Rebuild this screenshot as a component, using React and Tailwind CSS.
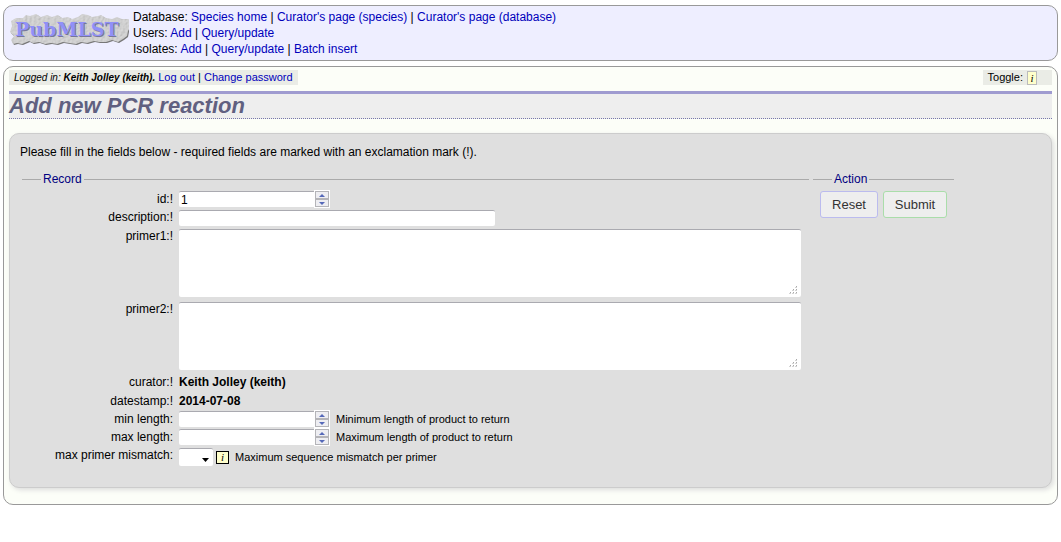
const link = 'text-[#0000bb] hover:underline';

function Logo() {
    return (
        <svg width="120" height="36" viewBox="0 0 120 36" role="img" aria-label="PubMLST">
            <defs>
                <filter id="stone" x="0" y="0" width="100%" height="100%">
                    <feTurbulence type="fractalNoise" baseFrequency="0.45" numOctaves="3" seed="4" result="noise" />
                    <feDiffuseLighting in="noise" surfaceScale="0.6" diffuseConstant="1.1" lightingColor="#d4d4d4" result="lit">
                        <feDistantLight azimuth="225" elevation="60" />
                    </feDiffuseLighting>
                    <feComposite in="lit" in2="SourceGraphic" operator="in" />
                </filter>
            </defs>
            <path
                d="M4 14l-1-5 5-3 7 0 3-3 4 1 6-2 5 3 6-2 5 2 6-2 4 3 6-1 4 2 6-2 4-3 6 1 4 2 6-1 3-1 5 3 6 1 5-2 5 2 6 0 4 2-1 5-3 5-1 5-4 3-5 3-6-2-6 2-7 0-5-1-7 2-6-1-5 2-7-1-6-1-6 2-6-1-6 1-6-2-6 1-4-2-7 3-5-1-4 1-2-4 3-4-4-4z"
                fill="#777"
            />
            <path
                d="M3 13l-1-5 5-3 7 0 3-3 4 1 6-2 5 3 6-2 5 2 6-2 4 3 6-1 4 2 6-2 4-3 6 1 4 2 6-1 3-1 5 3 6 1 5-2 5 2 6 0 4 2-1 5-3 5-1 5-4 3-5 3-6-2-6 2-7 0-5-1-7 2-6-1-5 2-7-1-6-1-6 2-6-1-6 1-6-2-6 1-4-2-7 3-5-1-4 1-2-4 3-4-4-4z"
                fill="#c4c4c4"
                filter="url(#stone)"
            />
            <g fontSize="19" fontWeight="700" fontFamily="'DejaVu Serif', serif">
                <text x="7" y="24" fill="#777799">PubMLST</text>
                <text x="6" y="23" fill="#9090f8">PubMLST</text>
            </g>
        </svg>
    );
}

function MenuLine({ title, items }) {
    return (
        <div>
            {title}:{' '}
            {items.map((item, i) => (
                <span key={item}>
                    {i > 0 && ' | '}
                    <a href="#" className={link}>{item}</a>
                </span>
            ))}
        </div>
    );
}

function Row({ id, label, children }) {
    return (
        <li className="flex items-start gap-1.5">
            <label htmlFor={id} className="w-[151px] shrink-0 text-right">{label}</label>
            {children}
        </li>
    );
}

function Comment({ children }) {
    return <span className="text-[11px] leading-4">{children}</span>;
}

function NumberField({ id, value }) {
    const step = 'flex h-2 w-3.5 items-center justify-center border border-[#b4b4b8] bg-[#eeeef2]';
    return (
        <div className="flex h-[18px] items-start">
            <input
                id={id}
                type="text"
                inputMode="numeric"
                defaultValue={value}
                className="h-4 w-[135px] rounded-l-xs border-t border-[#aaaab0] bg-white px-0.5 outline-none"
            />
            <div className="-mt-px flex flex-col border border-white bg-white">
                <button type="button" aria-label="Increase" className={step}>
                    <svg width="6" height="3" viewBox="0 0 6 3"><path d="M0 3L3 0L6 3z" fill="#5568b8" /></svg>
                </button>
                <button type="button" aria-label="Decrease" className={step}>
                    <svg width="6" height="3" viewBox="0 0 6 3"><path d="M0 0L3 3L6 0z" fill="#5568b8" /></svg>
                </button>
            </div>
        </div>
    );
}

function PrimerField({ id }) {
    return (
        <div className="mt-px mb-1 flex h-[68px] w-[622px] items-end rounded-xs border-t border-[#aaaab0] bg-white">
            <textarea id={id} className="h-full flex-1 resize-none px-0.5 outline-none" />
            <svg width="10" height="10" viewBox="0 0 10 10" fill="#aaa" className="mr-0.5 mb-0.5" aria-hidden="true">
                <path d="M7 1h1v1h-1zM4 4h1v1h-1zM7 4h1v1h-1zM1 7h1v1h-1zM4 7h1v1h-1zM7 7h1v1h-1z" />
                <path d="M6 2h2v.5h-2zM3 5h2v.5h-2zM6 5h2v.5h-2zM0 8h2v.5h-2zM3 8h2v.5h-2zM6 8h2v.5h-2z" />
            </svg>
        </div>
    );
}

export default function App() {
    const button = 'h-[27px] rounded-[3px] border bg-[#eee] text-center text-[13px] text-[#333]';

    return (
        <div className="px-[3px] pt-[5px] font-['Liberation_Sans',Arial,sans-serif] text-xs text-black">
            {/* Site menu */}
            <header className="flex gap-1 rounded-[10px] border border-[#999] bg-[#eeeeff] py-[3px] pl-[5px]">
                <div className="pt-1"><Logo /></div>
                <nav className="leading-4">
                    <MenuLine title="Database" items={['Species home', "Curator's page (species)", "Curator's page (database)"]} />
                    <MenuLine title="Users" items={['Add', 'Query/update']} />
                    <MenuLine title="Isolates" items={['Add', 'Query/update', 'Batch insert']} />
                </nav>
            </header>

            <main className="mt-[5px] rounded-[10px] border border-[#999] bg-[#fcfef8] px-[5px] pt-[3px] pb-4">
                <div className="flex justify-between text-[11px] leading-[15px]">
                    <div className="bg-[#eaece6] px-[5px]">
                        <i className="text-[10px]">Logged in: <b>Keith Jolley (keith).</b></i>{' '}
                        <a href="#" className={link}>Log out</a> | <a href="#" className={link}>Change password</a>
                    </div>
                    <div className="flex items-center gap-1 bg-[#eaece6] pr-[15px] pl-[5px]">
                        Toggle:
                        <button type="button" className="h-3.5 w-2.5 border border-[#bbb] bg-[#ffffcc] font-['Liberation_Serif',serif] leading-3 italic">
                            i
                        </button>
                    </div>
                </div>

                <h1 className="mt-1.5 border-t-3 border-b border-t-[#9f9bd0] border-b-[#7777aa] bg-[#eee] text-[22px] leading-6 font-bold text-[#606080] italic [border-bottom-style:dotted]">
                    Add new PCR reaction
                </h1>

                <div className="mt-3.5 rounded-[10px] border border-[#ccc] bg-[#dfdfdf] px-2.5 pt-2.5 pb-[21px] leading-4 shadow-[2px_2px_5px_#ddd]">
                    <p>Please fill in the fields below - required fields are marked with an exclamation mark (!).</p>

                    <form className="mt-[11px] flex items-start gap-1 pl-0.5" onSubmit={(e) => e.preventDefault()}>
                        <fieldset className="w-[787px] border-t border-[#aaa]">
                            <legend className="ml-[19px] px-0.5 text-[#000080]">Record</legend>
                            <ul className="pt-1">
                                <Row id="id" label="id:!"><NumberField id="id" value="1" /></Row>
                                <Row id="description" label="description:!">
                                    <input id="description" type="text" className="mt-px mb-0.5 h-4 w-[316px] rounded-xs border-t border-[#aaaab0] bg-white px-0.5 outline-none" />
                                </Row>
                                <Row id="primer1" label="primer1:!"><PrimerField id="primer1" /></Row>
                                <Row id="primer2" label="primer2:!"><PrimerField id="primer2" /></Row>
                                <Row label="curator:!"><b className="h-[19px]">Keith Jolley (keith)</b></Row>
                                <Row label="datestamp:!"><b className="h-[18px]">2014-07-08</b></Row>
                                <Row id="min_length" label="min length:">
                                    <NumberField id="min_length" />
                                    <Comment>Minimum length of product to return</Comment>
                                </Row>
                                <Row id="max_length" label="max length:">
                                    <NumberField id="max_length" />
                                    <Comment>Maximum length of product to return</Comment>
                                </Row>
                                <Row id="mismatch" label="max primer mismatch:">
                                    <div className="flex items-center pt-px">
                                        <div className="grid h-[18px] w-[34px] items-center rounded-xs border-t border-[#aaaab0] bg-white">
                                            <select id="mismatch" className="col-start-1 row-start-1 h-4 w-full appearance-none pl-1 outline-none">
                                                <option></option>
                                                <option>0</option>
                                                <option>1</option>
                                                <option>2</option>
                                            </select>
                                            <svg width="7" height="4" viewBox="0 0 7 4" className="pointer-events-none col-start-1 row-start-1 mt-1 mr-1 justify-self-end">
                                                <path d="M0 0h7L3.500 4z" />
                                            </svg>
                                        </div>
                                        <button
                                            type="button"
                                            title="Maximum sequence mismatch per primer"
                                            className="mr-1.5 ml-[3px] h-[13px] w-[13px] border border-black bg-[#ffffcc] font-['Liberation_Serif',serif] text-[11px] leading-[11px] italic"
                                        >
                                            i
                                        </button>
                                        <Comment>Maximum sequence mismatch per primer</Comment>
                                    </div>
                                </Row>
                            </ul>
                        </fieldset>

                        <fieldset className="border-t border-[#aaa]">
                            <legend className="ml-[19px] px-0.5 text-[#000080]">Action</legend>
                            <div className="flex gap-[5px] px-[7px] pt-1">
                                <button type="reset" className={`${button} w-[58px] border-[#bbbbee]`}>Reset</button>
                                <button type="submit" className={`${button} w-16 border-[#aaddaa]`}>Submit</button>
                            </div>
                        </fieldset>
                    </form>
                </div>
            </main>
        </div>
    );
}
